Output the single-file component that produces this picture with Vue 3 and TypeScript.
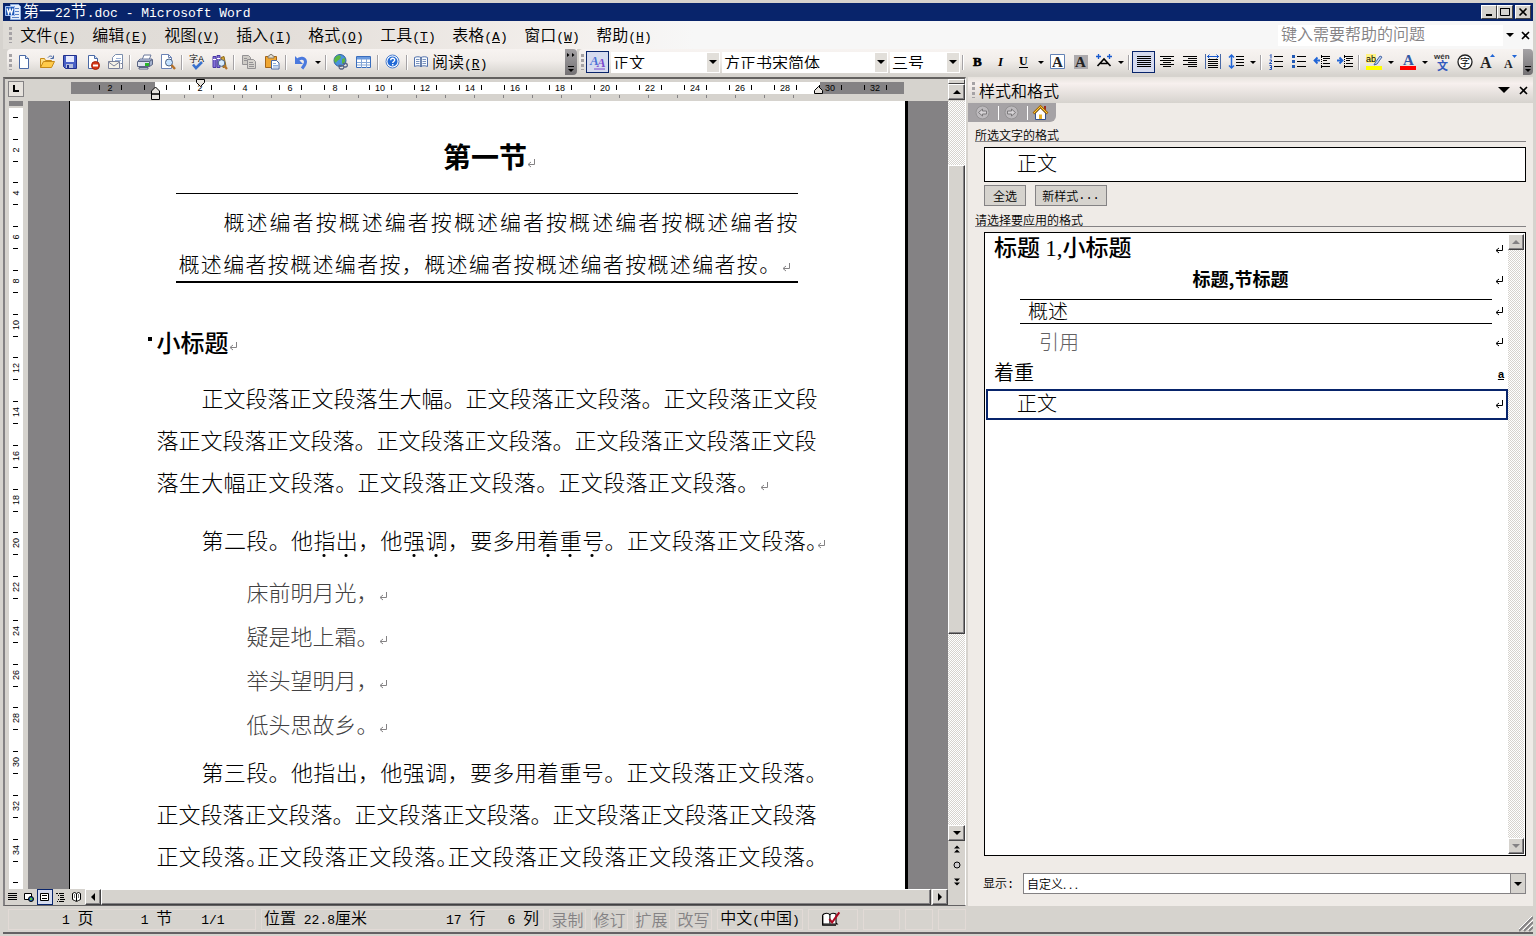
<script setup lang="ts">
import { h, type FunctionalComponent } from 'vue'

/** Sets runs of Latin text in the narrow fixed-width face used beside the Chinese glyphs. */
const Mixed: FunctionalComponent<{ text: string }> = (props) =>
  h('span', { class: 'mixed' }, props.text.split(/([\x20-\x7e]+)/).filter(Boolean).map((part) =>
    /^[\x20-\x7e]/.test(part) ? h('span', { class: 'latin' }, part) : part))
Mixed.props = ['text']

const page = '<path d="M3.500 1.500h6l3 3v10h-9z" fill="#fff" stroke="#4a69a5"/><path d="M9.500 1.500v3h3" fill="#d6e3f7" stroke="#4a69a5"/>'
const lines = (xs: number[][]) => xs.map(([x, y, w]) => `<path d="M${x} ${y}.5h${w}" stroke="#000"/>`).join('')
const letter = (ch: string, x: number, y: number, size: number, fill: string, extra = '') =>
  `<text x="${x}" y="${y}" font-size="${size}" font-family="Liberation Serif, serif" font-weight="bold" fill="${fill}" ${extra}>${ch}</text>`

const icons: Record<string, string> = {
  word: '<path d="M5.500.5h8l2 2v13h-10z" fill="#e7effa" stroke="#8cadde"/><path d="M10 4.500h4M10 7.500h4M10 10.500h4M7 13.500h7" stroke="#5a82c6"/><path d="M0 2h10v10H0z" fill="#2159b5"/><path d="M.5 2.500h9v9h-9z" fill="none" stroke="#a5c3f7"/><path d="M2 4.500l1.500 5L5 5l1.500 4.500L8 4.500" fill="none" stroke="#fff" stroke-width="1.300"/>',
  new: page,
  open: '<path d="M1.500 13.500v-9h4l1 2h6v2" fill="#ffdf84" stroke="#c68a18"/><path d="M1.500 13.500l3-6h11l-3 6z" fill="#ffcb4a" stroke="#c68a18"/><path d="M9 3.500c1.500-2 4-2 5 .500M14.500 1.500V4.500h-3" fill="none" stroke="#4a69a5"/>',
  save: '<path d="M1.500 1.500h13v13h-11l-2-2z" fill="#4a61c6" stroke="#21308c"/><path d="M4 2h8v6H4z" fill="#e7ebff"/><path d="M4 10h7v4H4z" fill="#b5bede"/><path d="M5 11h2v3H5z" fill="#21308c"/>',
  permission: page + '<circle cx="10.500" cy="11.500" r="4" fill="#d63818" stroke="#a52008"/><path d="M8 11.500h5" stroke="#fff" stroke-width="2"/>',
  mail: '<path d="M4.500 8V3.500l3-3h7V11" fill="#fff" stroke="#7b8ead"/><path d="M8 4.500h5M7 6.500h6" stroke="#9cb2d6"/><path d="M.5 7.500h11v7H.5z" fill="#f7f3e7" stroke="#7b829c"/><path d="M.5 8l5.500 4 5.500-4" fill="none" stroke="#7b829c"/><path d="M12.500 9.500h2v5h-2" fill="#fff" stroke="#7b829c"/>',
  print: '<path d="M5 6l2-5h7l-2 5z" fill="#fff" stroke="#6b799c"/><path d="M1 7l2-2h12l-2 2z" fill="#c6cfe7" stroke="#6b799c"/><path d="M.5 7.500h12v5H.5z" fill="#dee3ef" stroke="#5a6584"/><path d="M12.500 7.500l3-2v5l-3 2z" fill="#a5b2ce" stroke="#5a6584"/><path d="M2 13.500h9v1.500H2z" fill="#fff" stroke="#5a6584"/><path d="M8 9h4v3H8z" fill="#29b629"/>',
  preview: '<path d="M1.500.5h7l3 3v11h-10z" fill="#fff" stroke="#6b82b5"/><path d="M8.500.5v3h3" fill="none" stroke="#6b82b5"/><circle cx="9" cy="8.500" r="3.500" fill="#c6e3ff" stroke="#4a6184"/><path d="M11.500 11l3.500 4" stroke="#b57128" stroke-width="2.400"/>',
  spell: '<text x="0" y="8" font-size="9" font-family="Noto Sans CJK SC, sans-serif">字</text><text x="9" y="8" font-size="9" font-family="Liberation Sans, sans-serif">A</text><path d="M4 10.500l3 3.500 6-6" fill="none" stroke="#3971ce" stroke-width="2.600"/>',
  research: '<path d="M1 2.500h3v11H1zM5 1.500h3v12H5z" fill="#8471d6" stroke="#4a38a5"/><path d="M9 3.500l3-1 2 10-3 1z" fill="#d6a639" stroke="#8c6918"/><path d="M1 5.500h3M5 4.500h3" stroke="#fff"/><circle cx="9.500" cy="9" r="3.300" fill="#d6ebff" stroke="#4a6184"/><path d="M12 11.500l3 3.500" stroke="#b57128" stroke-width="2.200"/>',
  copy: '<path d="M1.500 1.500h6l2 2v7h-8z" fill="#cecbc6" stroke="#949294"/><path d="M6.500 5.500h6l2 2v7h-8z" fill="#d6d3ce" stroke="#949294"/><path d="M3 4.500h3M3 6.500h3M8 8.500h4M8 10.500h5M8 12.500h5" stroke="#949294"/>',
  paste: '<path d="M1.500 2.500h11v11h-11z" fill="#efa631" stroke="#a56518"/><path d="M4 4V2h1.500L6 .5h2L8.500 2H10v2z" fill="#e7e3d6" stroke="#736d63" stroke-width=".8"/><path d="M7.500 6.500h5l2.500 2.500v6H7.500z" fill="#fff" stroke="#4a69a5"/><path d="M9 9.500h3M9 11.500h5M9 13h5" stroke="#8cadde"/>',
  undo: '<path d="M4 6.500c3-3.500 8-3 8.500 1 .2 2.500-1.500 4.500-3.500 7" fill="none" stroke="#4a79de" stroke-width="3"/><path d="M2 2v8h8z" fill="#4a79de"/>',
  web: '<circle cx="7" cy="6.500" r="6" fill="#4a92de" stroke="#31619c"/><path d="M4 2c3-2 5 1 3 3s-3 1-4 4c-3-2-2-5 1-7zM9 5l3-1v4l-3 2z" fill="#5ab642"/><path d="M5.500 11.500h4a1.800 1.800 0 010 3.500h-2a1.800 1.800 0 010-3.500zM10 9.500h3a1.800 1.800 0 010 3.500h-2" fill="none" stroke="#5a6584" stroke-width="1.300"/>',
  table: '<path d="M.5 2.500h14v11H.5z" fill="#fff" stroke="#396dbd"/><path d="M1 3h13v2.500H1z" fill="#6b9ade"/><path d="M5.500 5v9M10.500 5v9M1 8.500h13M1 11h13" stroke="#84a6d6"/>',
  help: '<circle cx="7.500" cy="7.500" r="6.500" fill="#fff" stroke="#4a7dce"/><circle cx="7.500" cy="7.500" r="5" fill="#2169d6"/><path d="M5.700 6.200c0-2.500 4-2.500 4-.2 0 1.500-2 1.500-2 3" fill="none" stroke="#fff" stroke-width="1.400"/><path d="M7 10h1.500v1.500H7z" fill="#fff"/>',
  read: '<path d="M.5 3.500c2-1 5-1 6.500 0 1.500-1 5-1 6.500 0v9c-2-1-5-1-6.500 0-1.500-1-4.500-1-6.500 0z" fill="#f7fbff" stroke="#5271ad"/><path d="M7 3.500v9" stroke="#31518c" stroke-width="1.400"/><path d="M2 5.500h3.500M2 7.500h3.500M2 9.500h3.500M8.500 5.500H12M8.500 7.500H12M8.500 9.500H12" stroke="#7b92bd"/>',
  styles: letter('A', 0, 11, 13, '#4a71d6', 'font-style="italic"') + letter('A', 7, 13, 13, '#7b4ace', 'font-style="italic"') + '<path d="M4 15h11" stroke="#7b4ace"/>',
  bold: letter('B', 3, 12, 13, '#000', 'stroke="#000" stroke-width=".6"'),
  italic: letter('I', 5, 12, 13, '#000', 'font-style="italic"'),
  underline: letter('U', 3, 11, 12, '#000') + '<path d="M3 13.500h9" stroke="#000"/>',
  border: '<path d="M.5.5h14v14H.5z" fill="#fff" stroke="#6382b5"/>' + letter('A', 2, 13, 15, '#222'),
  shade: '<path d="M1 1h14v14H1z" fill="#adaaad"/>' + letter('A', 2, 13, 15, '#222'),
  scale: '<path d="M1.500 12l6.500-7 6.500 7M4.500 9.500h7" fill="none" stroke="#000" stroke-width="1.600"/><path d="M0 2.500h5M2.500 0v5M16 2.500h-5M13.500 0v5" stroke="#1859ce" stroke-width="1.300"/>',
  justify: lines([[1, 2, 14], [1, 4, 14], [1, 6, 14], [1, 8, 14], [1, 10, 14], [1, 12, 14]]),
  center: lines([[1, 2, 14], [4, 4, 8], [1, 6, 14], [4, 8, 8], [1, 10, 14], [4, 12, 8]]),
  right: lines([[1, 2, 14], [6, 4, 9], [1, 6, 14], [6, 8, 9], [1, 10, 14], [6, 12, 9]]),
  distribute: lines([[3, 5, 10], [3, 7, 10], [3, 9, 10], [3, 11, 10], [3, 13, 10]]) + '<path d="M.5 0v15M15.500 0v15" stroke="#4a69a5"/><path d="M2 2.500h12M4.500 .5l-2 2 2 2M11.500 .5l2 2-2 2" fill="none" stroke="#1859ce"/>',
  spacing: lines([[8, 2, 8], [8, 5, 8], [8, 8, 8], [8, 11, 8]]) + '<path d="M3.500 1v13M1 3.500L3.500 1 6 3.500M1 11.500L3.500 14 6 11.500" fill="none" stroke="#2165d6" stroke-width="1.500"/>',
  numbers: lines([[6, 2, 9], [6, 7, 9], [6, 12, 9]]) + '<path d="M2 1.500l1-1v4M1.500 6h2v1.500l-2 1.500v.500h2.500M1.500 11.500h2v4h-2M2 13.500h1.500" fill="none" stroke="#1849b5"/>',
  bullets: lines([[6, 2, 9], [6, 7, 9], [6, 12, 9]]) + '<path d="M1 1h3v3H1zM1 6h3v3H1zM1 11h3v3H1z" fill="#2159b5"/>',
  outdent: lines([[7, 2, 9], [9, 4, 7], [9, 6, 4], [9, 9, 7], [7, 12, 9]]) + '<path d="M7.500 1v14" stroke="#000" stroke-dasharray="1 1"/><path d="M0 6.500h6M3.500 3.500l-3 3 3 3" fill="none" stroke="#2165d6" stroke-width="1.800"/>',
  indent: lines([[7, 2, 9], [9, 4, 7], [9, 6, 4], [9, 9, 7], [7, 12, 9]]) + '<path d="M7.500 1v14" stroke="#000" stroke-dasharray="1 1"/><path d="M0 6.500h6M2.500 3.500l3 3-3 3" fill="none" stroke="#2165d6" stroke-width="1.800"/>',
  highlight: '<path d="M0 0h10v9H0z" fill="#fff384"/><text x="0" y="8" font-size="9" font-family="Liberation Sans, sans-serif">ab</text><path d="M9 9l5-7 2 1-5 7-3 1z" fill="#bdd3f7" stroke="#4a69a5"/><path d="M0 12h16v4H0z" fill="#ff0"/>',
  color: letter('A', 3, 11, 15, '#3159a5') + '<path d="M0 12h16v4H0z" fill="#f00"/>',
  phonetic: '<text x="0" y="5" font-size="8" font-family="Liberation Sans, sans-serif" font-weight="bold" fill="#333">wén</text><text x="3" y="16" font-size="11" font-family="Noto Sans CJK SC, sans-serif" font-weight="bold" fill="#3159bd">文</text>',
  enclose: '<circle cx="8" cy="8" r="7" fill="#fff" stroke="#222" stroke-width="1.300"/><text x="3" y="12" font-size="10" font-family="Noto Sans CJK SC, sans-serif">字</text>',
  grow: letter('A', 0, 14, 16, '#222') + '<path d="M10 3h5l-2.500-3z" fill="#2165d6"/>',
  shrink: letter('A', 1, 14, 12, '#222') + '<path d="M9 1h5l-2.500 3z" fill="#2165d6"/>',
  back: '<circle cx="7.500" cy="7.500" r="6.500" fill="#bdbabd" stroke="#949294"/><path d="M3.500 7.500l4-3.500v2h4v3h-4v2z" fill="#d6d3d6" stroke="#7b797b"/>',
  forward: '<circle cx="7.500" cy="7.500" r="6.500" fill="#bdbabd" stroke="#949294"/><path d="M11.500 7.500l-4-3.500v2h-4v3h4v2z" fill="#d6d3d6" stroke="#7b797b"/>',
  home: '<path d="M11 1h2v4h-2z" fill="#9c2821"/><path d="M2.500 8v6.500h10V8l-5-5z" fill="#fff" stroke="#31518c"/><path d="M.5 8.500l7-7 7 7" fill="none" stroke="#a56908" stroke-width="2.600"/><path d="M1 8l6.500-6.500L14 8" fill="none" stroke="#ffcf39"/><path d="M6 9.500h3V14H6z" fill="#e7b229"/>',
  normal: '<path d="M3 4.500h9M3 6.500h9M3 8.500h9M3 10.500h9" stroke="#000"/>',
  webview: '<path d="M3.500 4.500h7v6h-7z" fill="#fff" stroke="#000"/><circle cx="10" cy="10" r="2.500" fill="#2161b5" stroke="#000"/><path d="M9 9h2v2H9z" fill="#5ac642"/>',
  print2: '<path d="M3.500 4.500h8v7h-8z" fill="#fff" stroke="#000"/><path d="M5 6.500h5M5 9.500h5" stroke="#000"/>',
  outline: '<path d="M3 4.500h2M6 4.500h5M5 6.500h1M7 6.500h4M7 8.500h4M5 10.500h1M7 10.500h5M4 12.500h1M6 12.500h5" stroke="#000"/>',
  reading: '<path d="M3.500 4.500l2-1 2 1 2-1 2 1v6l-2 1-2 1-2-1-2-1z" fill="#fff" stroke="#000"/><path d="M7.500 5v7M5 6h1M9 6h1M5 8h1M9 8h1" stroke="#000"/>',
  proof: '<path d="M1.500 4.500l1-1c2-1 4-1 5.500.500 1.500-1.500 3.500-1.500 5.500-.500v8l1 1h-13z" fill="#fff" stroke="#000"/><path d="M1.500 5v8.500h12" fill="none" stroke="#000"/><path d="M8 4v8" stroke="#000"/><path d="M7.500 8l2.500 3 6.500-9" fill="none" stroke="#ad0821" stroke-width="1.800"/>',
  para: '<path d="M7.500 0v5.500H1.500M4 3l-3 2.500L4 8" fill="none" stroke="currentColor"/>',
}

const menus = [['文件', 'F'], ['编辑', 'E'], ['视图', 'V'], ['插入', 'I'], ['格式', 'O'], ['工具', 'T'], ['表格', 'A'], ['窗口', 'W'], ['帮助', 'H']]

interface Tool { icon?: string; label?: string; on?: boolean }
const sep: Tool = {}
const drop: Tool = { icon: 'drop', label: '更多' }
const standard: Tool[] = [
  { icon: 'new', label: '新建' }, { icon: 'open', label: '打开' }, { icon: 'save', label: '保存' }, { icon: 'permission', label: '权限' }, { icon: 'mail', label: '电子邮件' }, sep,
  { icon: 'print', label: '打印' }, { icon: 'preview', label: '打印预览' }, sep,
  { icon: 'spell', label: '拼写和语法' }, { icon: 'research', label: '信息检索' }, sep,
  { icon: 'copy', label: '复制' }, { icon: 'paste', label: '粘贴' }, sep,
  { icon: 'undo', label: '撤消' }, drop, sep,
  { icon: 'web', label: '超链接' }, { icon: 'table', label: '插入表格' }, sep,
  { icon: 'help', label: '帮助' }, sep,
]
const formatting: Tool[] = [
  sep, { icon: 'bold', label: '加粗' }, { icon: 'italic', label: '倾斜' }, { icon: 'underline', label: '下划线' }, drop,
  { icon: 'border', label: '字符边框' }, { icon: 'shade', label: '字符底纹' }, { icon: 'scale', label: '字符缩放' }, drop, sep,
  { icon: 'justify', label: '两端对齐', on: true }, { icon: 'center', label: '居中' }, { icon: 'right', label: '右对齐' }, { icon: 'distribute', label: '分散对齐' }, { icon: 'spacing', label: '行距' }, drop, sep,
  { icon: 'numbers', label: '编号' }, { icon: 'bullets', label: '项目符号' }, { icon: 'outdent', label: '减少缩进量' }, { icon: 'indent', label: '增加缩进量' }, sep,
  { icon: 'highlight', label: '突出显示' }, drop, { icon: 'color', label: '字体颜色' }, drop,
  { icon: 'phonetic', label: '拼音指南' }, { icon: 'enclose', label: '带圈字符' }, { icon: 'grow', label: '增大字体' }, { icon: 'shrink', label: '缩小字体' },
]
const combos = [
  { id: 'style', name: '样式', value: '正文' },
  { id: 'font', name: '字体', value: '方正书宋简体' },
  { id: 'size', name: '字号', value: '三号' },
]

const hNumbers = Array.from({ length: 18 }, (_, i) => (i - 1) * 2).filter((n) => n !== 0)
const hTicks = Array.from({ length: 18 }, (_, i) => (i - 1) * 45)
const hMinor = Array.from({ length: 22 }, (_, i) => 114 + i * 29)
const vNumbers = Array.from({ length: 17 }, (_, i) => (i + 1) * 2)

const poem = ['床前明月光，', '疑是地上霜。', '举头望明月，', '低头思故乡。']
const views = ['normal', 'webview', 'print2', 'outline', 'reading']
const viewNames = ['普通视图', 'Web 版式视图', '页面视图', '大纲视图', '阅读版式']
const modes = ['录制', '修订', '扩展', '改写']
</script>

<template>
  <div class="window">
    <header class="title-bar">
      <svg class="icon" viewBox="0 0 16 16" v-html="icons.word" />
      <h1><Mixed text="第一22节.doc - Microsoft Word" /></h1>
      <div class="win-buttons">
        <button type="button" aria-label="最小化"><svg viewBox="0 0 12 10"><path d="M3 8h6" stroke="#000" stroke-width="2" /></svg></button>
        <button type="button" aria-label="最大化"><svg viewBox="0 0 12 10"><path d="M1.500 1.500h9v7h-9zM1 1.500h10" fill="none" stroke="#000" /></svg></button>
        <button type="button" class="close" aria-label="关闭"><svg viewBox="0 0 12 10"><path d="M2.500 1.500l7 7M9.500 1.500l-7 7" stroke="#000" stroke-width="1.600" /></svg></button>
      </div>
    </header>

    <nav class="menu-bar">
      <i class="grip" />
      <button v-for="[name, key] in menus" :key="key" type="button" class="menu"><span>{{ name }}<span class="latin">(<u>{{ key }}</u>)</span></span></button>
      <div class="ask">
        <input type="text" aria-label="帮助" placeholder="键入需要帮助的问题" />
        <button type="button" aria-label="展开"><i class="tri" /></button>
      </div>
      <button type="button" class="doc-close" aria-label="关闭文档"><svg viewBox="0 0 9 9"><path d="M1 1l7 7M8 1L1 8" stroke="#000" stroke-width="1.600" /></svg></button>
    </nav>

    <div class="toolbars">
      <div class="toolbar standard">
        <i class="grip" />
        <template v-for="(t, i) in standard" :key="i">
          <i v-if="!t.icon" class="sep" />
          <button v-else-if="t.icon === 'drop'" type="button" class="drop" :aria-label="t.label"><i class="tri small" /></button>
          <button v-else type="button" class="tool" :aria-label="t.label"><svg class="icon" viewBox="0 0 16 16" v-html="icons[t.icon]" /></button>
        </template>
        <button type="button" class="read"><svg class="icon" viewBox="0 0 16 16" v-html="icons.read" /><span>阅读<span class="latin">(<u>R</u>)</span></span></button>
        <button type="button" class="overflow" aria-label="工具栏选项"><svg viewBox="0 0 12 26"><path d="M2 4l2.500 2L2 8zM7 4l2.500 2L7 8z" /><path d="M3 17.500h6" stroke="#000" /><path d="M3 20h6l-3 3z" /></svg></button>
      </div>
      <div class="toolbar formatting">
        <i class="grip" />
        <button type="button" class="tool on" aria-label="格式窗格"><svg class="icon" viewBox="0 0 16 16" v-html="icons.styles" /></button>
        <span v-for="c in combos" :key="c.id" class="combo" :class="c.id">
          <select :aria-label="c.name"><option>{{ c.value }}</option></select>
          <span class="combo-arrow"><i class="tri" /></span>
        </span>
        <template v-for="(t, i) in formatting" :key="i">
          <i v-if="!t.icon" class="sep" />
          <button v-else-if="t.icon === 'drop'" type="button" class="drop" :aria-label="t.label"><i class="tri small" /></button>
          <button v-else type="button" class="tool" :class="{ on: t.on }" :aria-label="t.label"><svg class="icon" viewBox="0 0 16 16" v-html="icons[t.icon]" /></button>
        </template>
        <button type="button" class="overflow narrow" aria-label="工具栏选项"><svg viewBox="0 0 12 26"><path d="M3 17.500h6" stroke="#000" /><path d="M3 20h6l-3 3z" /></svg></button>
      </div>
    </div>

    <main class="work">
      <section class="editor">
        <div class="editor-top">
          <div class="corner"><button type="button" aria-label="制表符"><svg viewBox="0 0 10 10"><path d="M3 1v6h5" fill="none" stroke="#000" stroke-width="2" /></svg></button></div>
          <div class="h-ruler">
            <svg width="836" height="23" viewBox="0 0 836 23">
              <path d="M1 5h84v12H1zM750 5h84v12h-84z" fill="#848284" />
              <path d="M85 5h665v12H85z" fill="#fff" />
              <path v-for="x in hTicks" :key="x" :d="`M${x + 74}.5 8v5M${x + 96}.5 8v5`" stroke="#000" />
              <path v-for="x in hMinor" :key="x" :d="`M${x}.5 18v3`" stroke="#848284" />
              <text v-for="n in hNumbers" :key="n" :x="85 + n * 45 / 2" y="14" text-anchor="middle">{{ Math.abs(n) }}</text>
              <path d="M81.500 22.500v-5.500h8v5.500zM81.500 17v-3l4-4 4 4v3zM126.500 2.500h8v3l-4 4-4-4zM744.500 16.500v-3l4-4 4 4v3z" fill="#e7e3de" stroke="#000" />
            </svg>
          </div>
          <div class="v-top"><i class="split" /><button type="button" class="arrow" aria-label="向上滚动"><i class="tri up" /></button></div>
        </div>

        <div class="editor-mid">
          <div class="v-ruler">
            <svg width="14" height="789" viewBox="0 0 14 789">
              <path d="M0 0h14v5H0z" fill="#848284" /><path d="M0 7h14v782H0z" fill="#fff" />
              <path d="M4 16.500h5M4 781.500h5" stroke="#000" />
              <g v-for="n in vNumbers" :key="n">
                <path :d="`M4 ${Math.round(5 + n * 21.87) - 11}.5h5M4 ${Math.round(5 + n * 21.87) + 11}.5h5`" stroke="#000" />
                <text :transform="`translate(10 ${Math.round(5 + n * 21.87)}) rotate(-90)`" text-anchor="middle">{{ n }}</text>
              </g>
            </svg>
          </div>
          <div class="canvas">
            <article class="sheet">
              <h2>第一节<svg class="para" viewBox="0 0 9 9" v-html="icons.para" /></h2>
              <div class="summary">
                <p class="line fill first">概述编者按概述编者按概述编者按概述编者按概述编者按</p>
                <p class="line fill last">概述编者按概述编者按，概述编者按概述编者按概述编者按。<svg class="para" viewBox="0 0 9 9" v-html="icons.para" /></p>
              </div>
              <h3><i class="bullet" />小标题<svg class="para" viewBox="0 0 9 9" v-html="icons.para" /></h3>
              <div class="body-text">
                <p class="line fill indent">正文段落正文段落生大幅。正文段落正文段落。正文段落正文段</p>
                <p class="line fill">落正文段落正文段落。正文段落正文段落。正文段落正文段落正文段</p>
                <p class="line fill ending">落生大幅正文段落。正文段落正文段落。正文段落正文段落。<svg class="para" viewBox="0 0 9 9" v-html="icons.para" /></p>
              </div>
              <p class="line fill indent second">第二段。他<em>指出</em>，他<em>强调</em>，要多用<em>着重号</em>。正文段落正文段落<span class="half">。</span><svg class="para" viewBox="0 0 9 9" v-html="icons.para" /></p>
              <div class="poem">
                <p v-for="p in poem" :key="p">{{ p }}<svg class="para" viewBox="0 0 9 9" v-html="icons.para" /></p>
              </div>
              <div class="body-text third">
                <p class="line fill indent">第三段。他指出，他强调，要多用着重号。正文段落正文段落<span class="half">。</span></p>
                <p class="line fill">正文段落正文段落。正文段落正文段落。正文段落正文段落正文段落</p>
                <p class="line fill">正文段落<span class="half">。</span>正文段落正文段落<span class="half">。</span>正文段落正文段落正文段落正文段落<span class="half">。</span></p>
                <p class="line fill">正文段落正文段落。正文段落正文段落。正文段落正文段落正文段落</p>
              </div>
            </article>
          </div>
          <div class="v-scroll">
            <div class="track"><i class="v-thumb" /></div>
            <button type="button" class="arrow" aria-label="向下滚动"><i class="tri" /></button>
            <button type="button" class="browse" aria-label="前一页"><svg viewBox="0 0 16 16"><path d="M5 7.500l3-3 3 3zM5 11.500l3-3 3 3z" /></svg></button>
            <button type="button" class="browse" aria-label="选择浏览对象"><svg viewBox="0 0 16 16"><circle cx="8" cy="8" r="3" fill="#cecbce" stroke="#000" /></svg></button>
            <button type="button" class="browse" aria-label="下一页"><svg viewBox="0 0 16 16"><path d="M5 5.500l3 3 3-3zM5 9.500l3 3 3-3z" /></svg></button>
          </div>
        </div>

        <div class="editor-bottom">
          <button v-for="(v, i) in views" :key="v" type="button" class="view" :class="{ on: i === 2 }" :aria-label="viewNames[i]"><svg viewBox="0 0 16 16" v-html="icons[v]" /></button>
          <button type="button" class="arrow" aria-label="向左滚动"><i class="tri left" /></button>
          <div class="h-track"><i class="h-thumb" /></div>
          <button type="button" class="arrow" aria-label="向右滚动"><i class="tri right" /></button>
        </div>
      </section>

      <aside class="pane">
        <header class="pane-head">
          <i class="grip" />
          <h2>样式和格式</h2>
          <button type="button" aria-label="其他任务窗格"><i class="tri big" /></button>
          <button type="button" aria-label="关闭窗格"><svg width="9" height="9" viewBox="0 0 9 9"><path d="M1 1l7 7M8 1L1 8" stroke="#000" stroke-width="1.600" /></svg></button>
        </header>
        <div class="pane-nav">
          <button type="button" aria-label="后退"><svg class="icon" viewBox="0 0 16 16" v-html="icons.back" /></button><i />
          <button type="button" aria-label="前进"><svg class="icon" viewBox="0 0 16 16" v-html="icons.forward" /></button><i />
          <button type="button" aria-label="开始"><svg class="icon" viewBox="0 0 16 16" v-html="icons.home" /></button>
        </div>
        <h3 class="group">所选文字的格式</h3>
        <div class="current song">正文</div>
        <div class="pane-buttons">
          <button type="button">全选</button>
          <button type="button">新样式<span class="dots">...</span></button>
        </div>
        <h3 class="group">请选择要应用的格式</h3>
        <div class="style-box">
          <ul>
            <li class="s-heading"><span>标题 <span class="roman">1,</span>小标题</span><svg class="mark" viewBox="0 0 9 9" v-html="icons.para" /></li>
            <li class="s-title"><span>标题,节标题</span><svg class="mark" viewBox="0 0 9 9" v-html="icons.para" /></li>
            <li class="s-summary"><span class="song">概述</span><svg class="mark" viewBox="0 0 9 9" v-html="icons.para" /></li>
            <li class="s-quote"><span>引用</span><svg class="mark" viewBox="0 0 9 9" v-html="icons.para" /></li>
            <li class="s-strong"><span>着重</span><b class="mark-a">a</b></li>
            <li class="s-body"><span class="song">正文</span><svg class="mark" viewBox="0 0 9 9" v-html="icons.para" /></li>
          </ul>
          <div class="list-scroll">
            <button type="button" class="arrow" aria-label="列表向上" disabled><i class="tri up" /></button>
            <div class="track" />
            <button type="button" class="arrow" aria-label="列表向下" disabled><i class="tri" /></button>
          </div>
        </div>
        <div class="show-row">
          <label for="show">显示<span class="dots">:</span></label>
          <span class="show-combo">
            <select id="show"><option>自定义. . .</option></select>
            <span class="show-arrow"><i class="tri" /></span>
          </span>
        </div>
      </aside>
    </main>

    <footer class="status">
      <div class="cell pages"><Mixed text="1 页" /><Mixed text="1 节" /><Mixed text="1/1" /></div>
      <div class="cell place"><Mixed text="位置 22.8厘米" /><Mixed class="row-no" text="17 行" /><Mixed text="6 列" /></div>
      <div v-for="m in modes" :key="m" class="cell mode">{{ m }}</div>
      <div class="cell lang"><Mixed text="中文(中国)" /></div>
      <div class="cell proof"><svg viewBox="0 0 18 16" v-html="icons.proof" /></div>
      <div class="cell blank wide" /><div class="cell blank" /><div class="cell blank" />
      <svg class="resize" viewBox="0 0 14 16"><path d="M0 15L14 1M5 15l9-9M10 15l4-4" stroke="#848284" stroke-width="2" /><path d="M-1 14L14-1M4 14l10-10M9 14l5-5" stroke="#fff" /></svg>
    </footer>
  </div>
</template>

<style>
body { margin: 0; }
.latin { font-family: 'Liberation Mono', monospace; font-size: 13px; white-space: pre; }
</style>

<style scoped>
* { box-sizing: border-box; }
h1, h2, h3, p, ul { margin: 0; padding: 0; font-weight: inherit; }
.window {
  display: flex; flex-direction: column; height: 100vh; min-height: 500px; padding: 3px 3px 2px;
  overflow: hidden; background: #d6d3ce; color: #000;
  font: 350 16px/20px 'Noto Sans CJK SC', sans-serif;
}
button { display: flex; align-items: center; justify-content: center; margin: 0; padding: 0; border: 0; background: none; color: inherit; font: inherit; }
select, input { margin: 0; border: 0; border-radius: 0; outline: 0; background: #fff; color: #000; font: inherit; appearance: none; }
.icon { display: block; flex: none; width: 16px; height: 16px; overflow: visible; }

.tri { display: block; width: 0; height: 0; border: 4px solid transparent; border-bottom: 0; border-top-color: #000; }
.tri.small { border-width: 3px 3px 0; }
.tri.big { border-width: 6px 6px 0; }
.tri.up { border: 4px solid transparent; border-top: 0; border-bottom-color: #000; }
.tri.left { border: 4px solid transparent; border-left: 0; border-right-color: #000; }
.tri.right { border: 4px solid transparent; border-right: 0; border-left-color: #000; }
.grip { flex: none; width: 3px; height: 16px; background: repeating-linear-gradient(#a5a2a5 0 3px, transparent 3px 5px); }

/* title bar */
.title-bar { display: flex; flex: none; align-items: center; height: 18px; padding-left: 2px; background: #08246b; color: #fff; }
.title-bar h1 { flex: 1; margin-left: 2px; font-size: 16px; line-height: 18px; white-space: nowrap; }
.win-buttons { display: flex; padding-right: 2px; }
.win-buttons button { width: 16px; height: 14px; border: 1px solid; border-color: #fff #424142 #424142 #fff; background: #d6d3ce; }
.win-buttons .close { margin-left: 2px; }
.win-buttons svg { width: 12px; height: 10px; }

/* menu bar */
.menu-bar {
  display: flex; flex: none; align-items: center; height: 28px; padding: 0 2px 0 6px;
  background: linear-gradient(90deg, #dedbd6 0, #e3ded9 280px, #f3efec 560px, #f7f7f7 690px);
}
.menu { width: 56px; margin-right: 16px; padding-top: 1px; white-space: nowrap; }
.menu-bar > .grip { margin-right: 8px; }
.ask { display: flex; width: 238px; height: 21px; margin-left: auto; background: #fff; }
.ask input { flex: 1; min-width: 0; padding: 0 3px 4px; }
.ask input::placeholder { color: #848284; opacity: 1; }
.ask button { width: 13px; background: #f7f7f7; }
.doc-close { width: 11px; margin-left: 4px; }
.doc-close svg { width: 9px; height: 9px; }

/* toolbars */
.toolbars { display: flex; flex: none; gap: 2px; height: 27px; padding: 0 0 1px 4px; }
.toolbar { display: flex; align-items: center; height: 26px; border-radius: 4px 0 0 4px; background: linear-gradient(#f7f3f1 0, #f1edea 45%, #d6d3ce 100%); }
.standard { flex: none; width: 570px; padding-left: 2px; }
.formatting { flex: 1; min-width: 0; padding-left: 2px; }
.tool { flex: none; width: 23px; height: 22px; }
.tool.on { border: 1px solid #08246b; background: #d6dbef; }
.formatting > .grip { margin-right: 2px; }
.sep { flex: none; width: 1px; height: 15px; margin: 0 3px 0 2px; background: #a5a2a5; box-shadow: 1px 0 #fff; }
.drop { flex: none; width: 11px; height: 22px; }
.read { gap: 2px; margin-left: 4px; white-space: nowrap; }
.read > span { padding-top: 1px; }
.overflow { width: 12px; height: 26px; margin-left: auto; border-radius: 0 4px 4px 0; background: linear-gradient(#a5a2a5, #737173); }
.overflow svg { flex: none; width: 12px; height: 26px; }
.overflow.narrow { flex: none; width: 10px; }
.combo { position: relative; display: flex; flex: none; height: 21px; margin-left: 2px; background: #fff; }
.combo select { width: 100%; padding: 0 14px 4px 2px; }
.combo-arrow { position: absolute; top: 1px; right: 1px; bottom: 1px; display: flex; align-items: center; justify-content: center; width: 12px; background: #e2dfda; pointer-events: none; }
.combo.style { width: 109px; }
.combo.font { width: 166px; }
.combo.size { width: 70px; }

/* editor */
.work { display: flex; flex: 1; min-height: 0; padding-top: 1px; }
.editor { display: flex; flex: 1; flex-direction: column; min-width: 0; border: 1px solid; border-width: 2px 1px 1px 2px; border-color: #63615f #fff #636163 #848284; }
.editor-top { display: flex; flex: none; height: 22px; }
.corner { flex: none; width: 23px; padding: 2px 0 0 3px; }
.corner button { width: 16px; height: 16px; border: 1px solid #848284; background: #e7e3de; }
.corner svg { width: 10px; height: 10px; }
.h-ruler { display: flex; flex: 1; justify-content: center; min-width: 0; margin-top: -2px; overflow: hidden; }
.h-ruler svg { flex: none; }
.h-ruler text, .v-ruler text { font: 9px 'Liberation Sans', sans-serif; }
.v-top { display: flex; flex: none; flex-direction: column; width: 17px; }
.split { height: 5px; border: 1px solid; border-color: #fff #424142 #424142 #fff; }
.arrow { flex: none; width: 16px; height: 16px; border: 1px solid; border-color: #fff #424142 #424142 #fff; background: #d6d3ce; box-shadow: inset -1px -1px #848284; }
.v-top .arrow { width: 17px; }
.editor-mid { display: flex; flex: 1; min-height: 0; overflow: hidden; }
.v-ruler { flex: none; width: 23px; padding-left: 4px; overflow: hidden; }
.canvas { display: flex; flex: 1; justify-content: center; min-width: 0; overflow: hidden; background: #848284; }
.sheet {
  flex: 0 1 839px; align-self: flex-start; min-width: 0; min-height: 1100px; padding: 25px 88px 0 87px; overflow: hidden;
  border: solid #000; border-width: 0 3px 0 1px; background: #fff; white-space: nowrap;
}
.v-scroll { display: flex; flex: none; flex-direction: column; width: 17px; }
.track { flex: 1; background: repeating-conic-gradient(#fff 0 25%, #d6d3ce 0 50%) 0 0 / 2px 2px; }
.v-scroll .track { padding-top: 64px; }
.v-thumb { display: block; height: 71%; border: 1px solid; border-color: #fff #424142 #424142 #fff; background: #d6d3ce; box-shadow: inset -1px -1px #848284; }
.v-scroll .arrow { width: 17px; }
.browse { flex: none; height: 16px; }
.browse svg { width: 16px; height: 16px; }
.editor-bottom { display: flex; flex: none; height: 16px; padding: 0 17px 0 0; }
.view { flex: none; width: 16px; height: 16px; }
.view svg { flex: none; width: 16px; height: 16px; }
.view.on { border: 1px solid #08246b; background: #d6dbef; }
.h-track { flex: 1; padding-right: 1px; }
.h-thumb { display: block; height: 16px; border: 1px solid; border-color: #fff #424142 #424142 #fff; box-shadow: inset -1px -1px #848284; }

/* document */
.para { width: 9px; height: 9px; color: #848284; }
.sheet h2 { padding-left: 6px; font-size: 28px; line-height: 61px; font-weight: 700; text-align: center; }
.line { font-size: 22px; line-height: 42px; font-weight: 300; }
.line.fill { text-align: justify; text-align-last: justify; }
.summary { height: 90px; margin: 6px 19px 0; padding-top: 6px; border: solid #000; border-width: 1px 0 2px; }
.summary .line { padding-left: 3px; font-size: 21px; }
.summary .first { padding-left: 48px; }
.summary .last { padding-right: 7px; }
.indent { padding-left: 45px; }
.ending { padding-right: 48px; }
.sheet h3 { display: flex; align-items: center; margin-top: 38px; margin-left: -9px; font-size: 24px; line-height: 42px; font-weight: 500; }
.sheet h3 .para { margin-top: 9px; }
.bullet { width: 4px; height: 4px; margin: 0 5px 7px 0; background: #000; }
.body-text { margin-top: 13px; }
.second { margin: 16px -10px 0 0; }
.second em { padding-bottom: 3px; font-style: normal; background: radial-gradient(circle, #000 0 1px, transparent 2px) 0 100% / 22px 5px repeat-x; }
.half { font-feature-settings: 'halt'; }
.poem { margin-top: 9px; padding-left: 90px; color: #424142; font-size: 22px; font-weight: 300; line-height: 44px; }
.body-text.third { margin-top: 5px; }
.third .line:last-child { line-height: 44px; }

/* task pane */
.pane { display: flex; flex: none; flex-direction: column; width: 565px; margin-left: 2px; background: #efebe7; }
.pane-head { display: flex; flex: none; align-items: center; height: 26px; padding: 0 4px; background: linear-gradient(#e7e3de, #f7f0ee 25%, #d6d3ce); }
.pane-head h2 { flex: 1; margin-left: 4px; font-size: 16px; }
.pane-head button { width: 12px; margin-left: 7px; }
.pane-nav { display: flex; flex: none; align-items: center; gap: 5px; width: 88px; height: 19px; padding-left: 7px; border-radius: 0 0 6px; background: #a5a2a5; }
.pane-nav i { width: 1px; height: 14px; margin-left: 2px; background: #fff; }
.group { flex: none; height: 14px; margin: 6px 7px 0; border-bottom: 1px solid #848284; font-size: 12px; line-height: 13px; }
.current { flex: none; height: 35px; margin: 5px 7px 0 16px; padding-left: 32px; border: 1px solid #000; background: #fff; }
.song { font-size: 20px; line-height: 30px; font-weight: 300; }
.pane-buttons { display: flex; flex: none; gap: 9px; margin: 3px 0 0 16px; }
.pane-buttons button { width: 42px; height: 21px; border: 1px solid #848284; background: #d6d3ce; font-size: 12px; }
.pane-buttons button + button { width: 72px; }
.dots { font-family: 'Liberation Mono', monospace; }
.pane-buttons + .group { margin-top: 7px; }
.style-box { display: flex; flex: 1; min-height: 0; margin: 5px 7px 0 16px; border: 1px solid #000; background: #fff; overflow: hidden; }
.style-box ul { flex: 1; min-width: 0; padding: 1px 0 0 1px; list-style: none; }
.style-box li { display: flex; align-items: center; justify-content: space-between; height: 31px; padding: 0 4px 0 8px; white-space: nowrap; }
.mark { flex: none; width: 9px; height: 9px; }
.s-heading { font-size: 23px; font-weight: 500; }
.s-heading > span { padding-bottom: 4px; }
.roman { font-family: 'Liberation Serif', serif; font-weight: 400; }
.s-title { font-size: 18px; font-weight: 700; }
.s-title > span { flex: 1; padding: 0 8px 6px 0; text-align: center; }
.style-box .s-summary { padding-left: 34px; }
.s-summary > span { flex: 1; height: 25px; margin-right: 3px; padding-left: 8px; border: solid #000; border-width: 1px 0; line-height: 22px; }
.style-box .s-quote { padding-left: 53px; font-size: 20px; font-weight: 300; }
.s-quote > span { padding-bottom: 2px; color: #636163; }
.s-strong { font-size: 20px; }
.s-strong > span { padding-bottom: 3px; }
.mark-a { font: bold 11px/12px 'Liberation Sans', sans-serif; text-decoration: underline; }
.style-box .s-body { padding: 0 2px 0 29px; border: 2px solid #08246b; }
.s-body .song { padding-bottom: 4px; line-height: 22px; }
.list-scroll { display: flex; flex: none; flex-direction: column; width: 17px; padding: 1px 1px 1px 0; }
.list-scroll .tri { border-top-color: #848284; }
.list-scroll .tri.up { border-bottom-color: #848284; }
.show-row { display: flex; flex: none; align-items: center; height: 50px; padding: 5px 7px 0 15px; font-size: 12px; }
.show-row label { width: 40px; }
.show-combo { position: relative; display: flex; flex: 1; height: 21px; border: 1px solid #848284; }
.show-combo select { width: 100%; padding: 0 18px 2px 3px; }
.show-arrow { position: absolute; top: 0; right: 0; bottom: 0; display: flex; align-items: center; justify-content: center; width: 15px; border-left: 1px solid #848284; background: #d6d3ce; pointer-events: none; }

/* status bar */
.status { display: flex; flex: none; align-items: center; gap: 5px; height: 28px; padding-left: 5px; border-bottom: 2px solid #636163; }
.cell { display: flex; flex: none; align-items: center; height: 21px; border: 1px solid #e2dad6; white-space: nowrap; }
.pages { width: 248px; padding-left: 53px; }
.pages > * { margin-right: 47px; }
.pages > * + * { margin-right: 29px; }
.place { width: 283px; padding-left: 2px; }
.row-no { margin: 0 22px 0 79px; }
.mode { justify-content: center; width: 37px; color: #848284; }
.lang { justify-content: center; width: 86px; }
.proof { width: 50px; padding-left: 12px; }
.proof svg { width: 20px; height: 18px; }
.blank { width: 28px; }
.blank.wide { width: 37px; }
.resize { align-self: flex-end; width: 14px; height: 16px; margin-left: auto; }
</style>
